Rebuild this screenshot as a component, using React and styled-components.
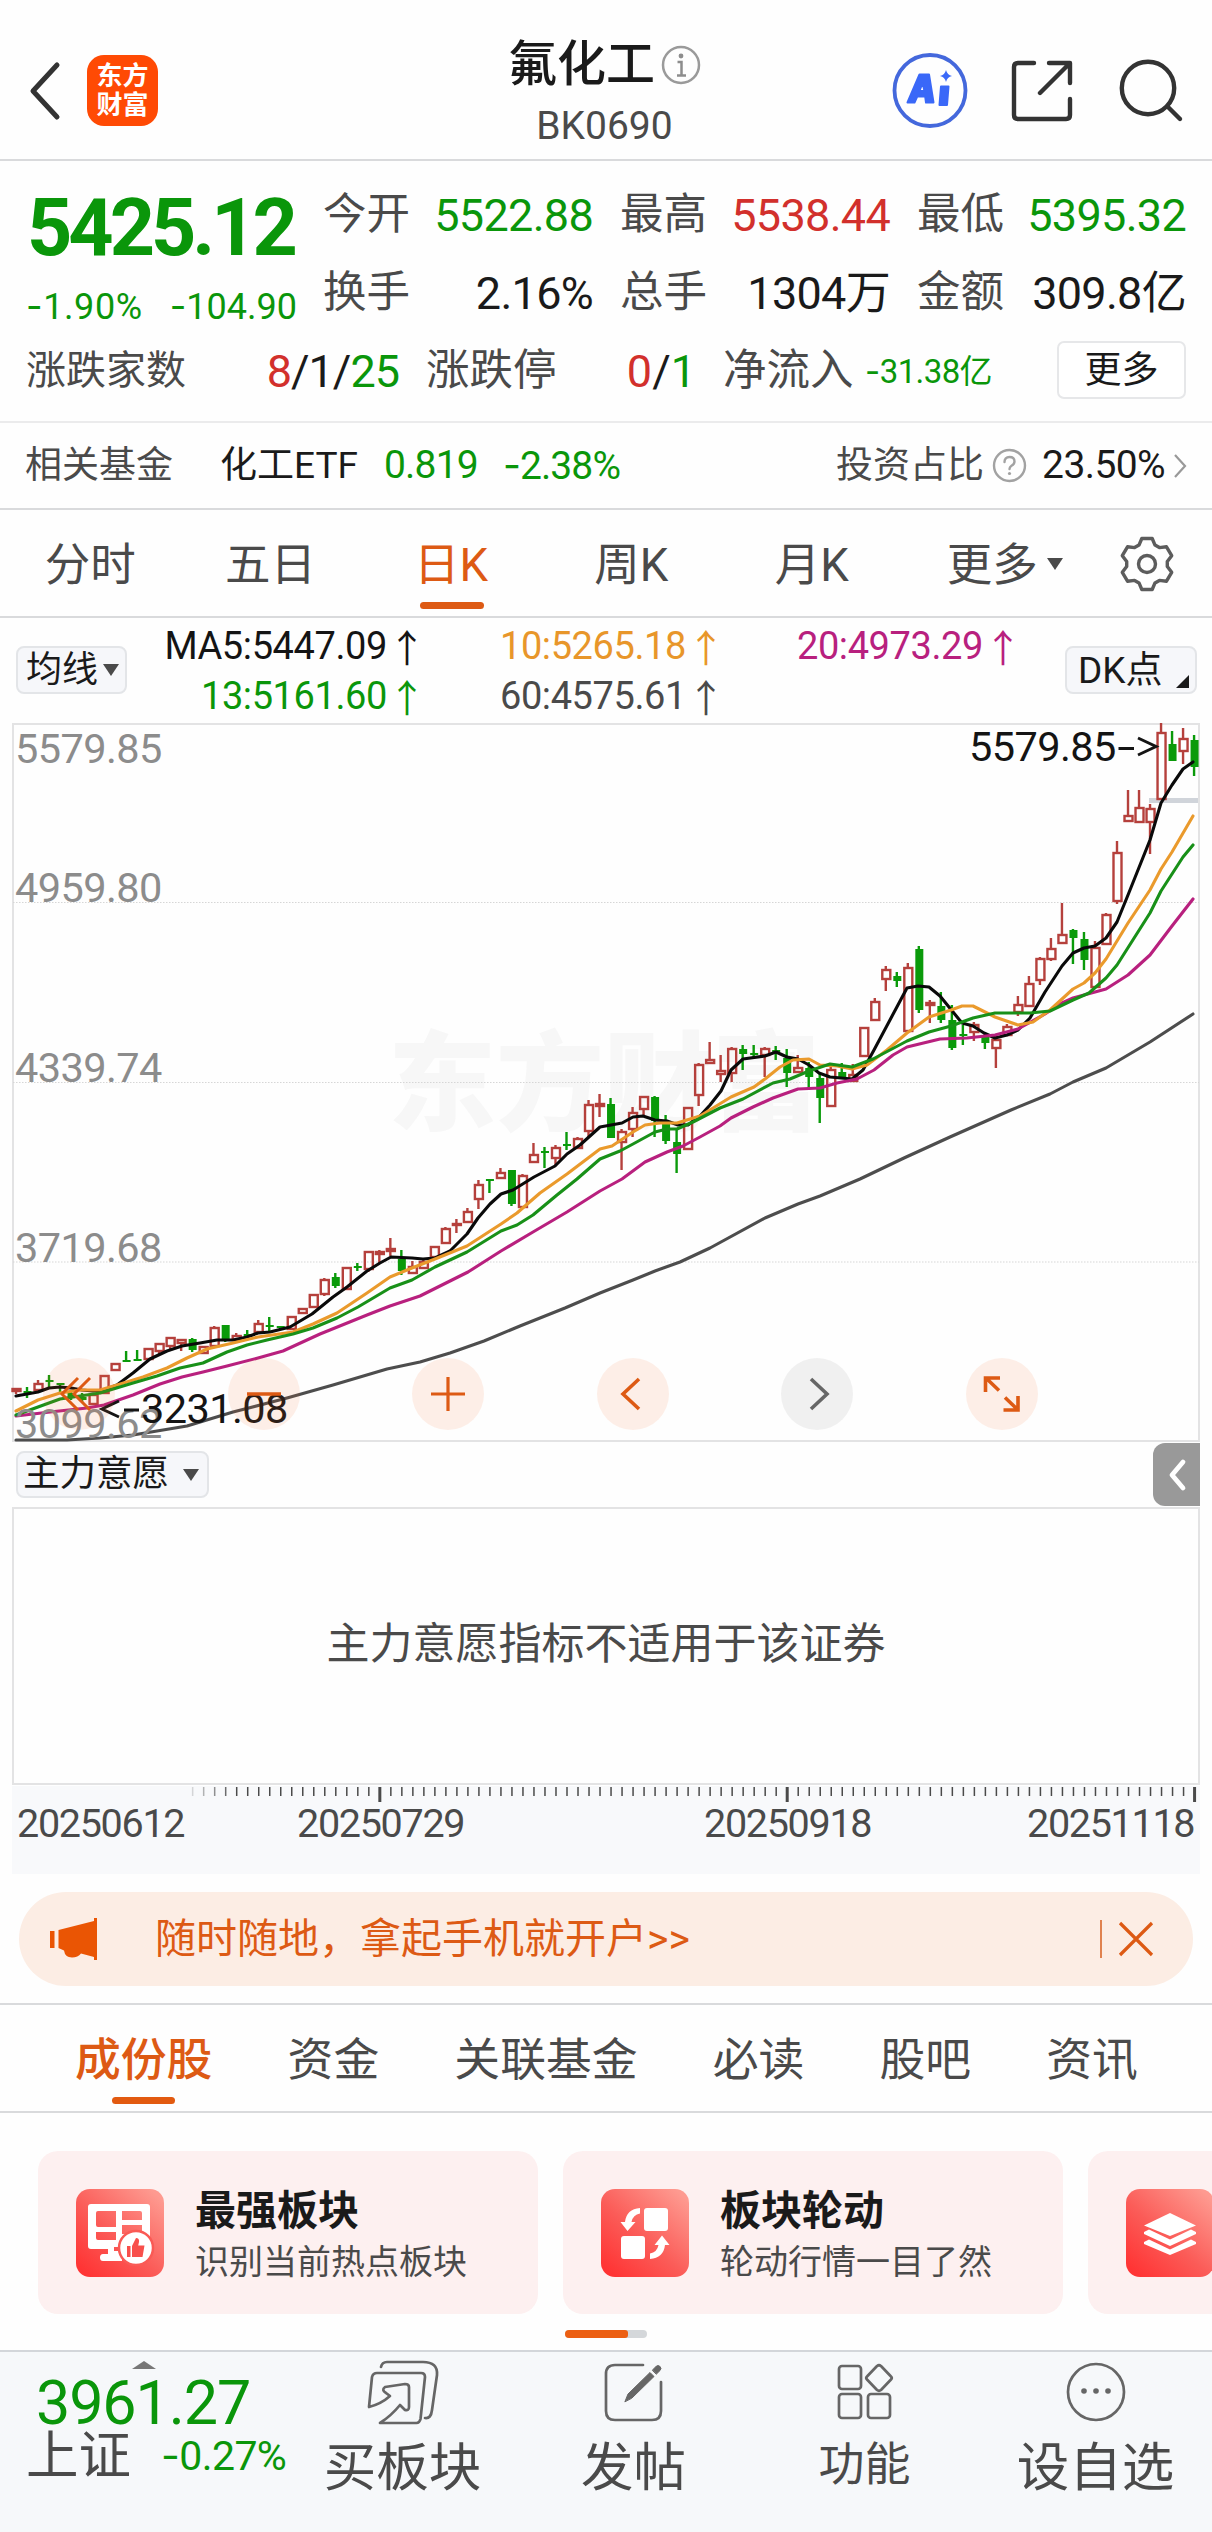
import React from 'react';
import styled, { createGlobalStyle, css } from 'styled-components';

const C = {
  ink: '#1a1a1a',
  label: '#4a4a4a',
  green: '#0a960a',
  red: '#d2302c',
  orange: '#dd5a14',
  line: '#d9dadc',
};

const GlobalStyle = createGlobalStyle`
  * { box-sizing: border-box; }
  html, body { margin: 0; padding: 0; background: #fff; }
  body {
    width: 1212px;
    font-family: Roboto, "Noto Sans CJK SC", sans-serif;
    color: ${C.ink};
    line-height: 1;
    overflow-x: hidden;
  }
  svg { display: block; flex: none; overflow: visible; }
`;

const Page = styled.div`
  width: 1212px;
  height: 2532px;
  background: #fefefe;
  display: flex;
  flex-direction: column;
  overflow: hidden;
`;

const Txt = styled.span`
  font-size: ${(p) => p.$size}px;
  line-height: 1;
  letter-spacing: ${(p) => p.$ls || 0}px;
  font-weight: ${(p) => p.$weight || 400};
  color: ${(p) => p.$color || C.ink};
  white-space: nowrap;
  margin: 0 ${(p) => p.$mr || 0}px 0 ${(p) => p.$ml || 0}px;
`;

const Minus = styled.span`
  font-family: Inter, Roboto, sans-serif;
`;

/* ---------- header ---------- */

const Header = styled.header`
  height: 161px;
  flex: none;
  border-bottom: 2px solid ${C.line};
  display: grid;
  grid-template-columns: 400px 1fr 400px;
  align-items: start;
`;

const HeaderLeft = styled.div`
  display: flex;
  align-items: center;
  gap: 26px;
  padding: 55px 0 0 28px;
`;

const Logo = styled.div`
  width: 71px;
  height: 71px;
  border-radius: 17px;
  background: #ff4a04;
  display: flex;
  flex-direction: column;
  align-items: center;
  justify-content: center;
  gap: 3px;
`;

const TitleBlock = styled.div`
  padding: 39px 3px 0 0;
  display: flex;
  flex-direction: column;
  align-items: center;
  gap: 18px;
`;

const TitleRow = styled.div`
  display: flex;
  align-items: center;
  gap: 6px;
  height: 50px;
`;

const HeaderRight = styled.div`
  display: flex;
  justify-content: flex-end;
  padding: 52px 29px 0 0;
`;

const HeaderAction = styled.div`
  padding-top: ${(p) => p.$top || 0}px;
  margin-left: ${(p) => p.$gap || 0}px;
`;

/* ---------- quote ---------- */

const Quote = styled.section`
  height: 262px;
  flex: none;
  border-bottom: 2px solid #ebebec;
  padding: 15px 26px 0 26px;
`;

const QuoteTop = styled.div`
  display: grid;
  grid-template-columns: 297px 1fr;
  height: 156px;
`;

const PriceBlock = styled.div`
  display: flex;
  flex-direction: column;
`;

const Price = styled.div`
  height: 104px;
  display: flex;
  align-items: center;
  padding-left: 1px;
`;

const Change = styled.div`
  height: 50px;
  width: 271px;
  padding-top: 8px;
  display: flex;
  justify-content: space-between;
`;

const Stats = styled.div`
  display: grid;
  grid-template-columns: 270px 270px 269px;
  column-gap: 27px;
  grid-template-rows: 78px 78px;
`;

const Stat = styled.div`
  display: flex;
  align-items: center;
  justify-content: space-between;
`;

const QuoteBottom = styled.div`
  height: 78px;
  display: grid;
  grid-template-columns: 373px 270px 269px 1fr;
  column-gap: 27px;
  align-items: center;
`;

const MoreButton = styled.button`
  width: 129px;
  height: 58px;
  justify-self: end;
  margin-top: -2px;
  border: 2px solid #e6e7e9;
  border-radius: 7px;
  background: #fff;
  padding: 0;
  font: inherit;
`;

/* ---------- related fund ---------- */

const Related = styled.section`
  height: 87px;
  flex: none;
  border-bottom: 2px solid ${C.line};
  display: flex;
  align-items: center;
  padding: 0 25px 0 25px;
`;

const Push = styled.div`
  margin-left: auto;
  display: flex;
  align-items: center;
`;

/* ---------- tabs ---------- */

const PeriodTabs = styled.nav`
  height: 108px;
  flex: none;
  border-bottom: 2px solid ${C.line};
  display: grid;
  grid-template-columns: repeat(6, 180.4px) 1fr;
`;

const PeriodTab = styled.div`
  position: relative;
  display: flex;
  justify-content: center;
  padding-top: ${(p) => p.$top || 33}px;
  ${(p) =>
    p.$active &&
    css`
      &::after {
        content: '';
        position: absolute;
        bottom: 7px;
        left: 59px;
        width: 64px;
        height: 7px;
        border-radius: 4px;
        background: ${C.orange};
      }
    `}
`;

const Down = styled.i`
  width: 0;
  height: 0;
  border-left: 8px solid transparent;
  border-right: 8px solid transparent;
  border-top: 12px solid #4a4a4a;
`;

const TabDown = styled(Down)`
  position: absolute;
  right: 19px;
  top: 48px;
`;

/* ---------- indicator bar ---------- */

const IndicatorBar = styled.section`
  height: 105px;
  flex: none;
  display: grid;
  grid-template-columns: 113px 288px 299px 297px 1fr;
  padding: 0 15px 0 16px;
`;

const Chip = styled.button`
  position: relative;
  display: flex;
  align-items: center;
  border: 2px solid #e3e5e8;
  border-radius: 8px;
  background: #f6f7fa;
  font: inherit;
  height: ${(p) => p.$h || 48}px;
  width: ${(p) => p.$w}px;
  padding: 0 0 0 ${(p) => p.$pad || 8}px;
  gap: ${(p) => p.$gap || 5}px;
`;

const ChipSlot = styled.div`
  padding-top: 28px;
  display: flex;
  justify-content: ${(p) => (p.$end ? 'flex-end' : 'flex-start')};
`;

const Corner = styled.i`
  position: absolute;
  right: 6px;
  bottom: 4px;
  border-left: 13px solid transparent;
  border-bottom: 13px solid #1a1a1a;
`;

const MaColumn = styled.div`
  display: flex;
  flex-direction: column;
  align-items: flex-end;
  padding-top: 3px;
`;

const MaItem = styled.div`
  height: 50px;
  display: flex;
  align-items: center;
  color: ${(p) => p.$color};
  font-size: 38px;
  letter-spacing: -0.4px;
`;

const Arrow = styled.span`
  font-family: "Noto Sans CJK SC", sans-serif;
  font-size: 38px;
  line-height: 50px;
  letter-spacing: 0;
  width: 20px;
  margin-left: 10px;
  display: flex;
  justify-content: center;
`;

/* ---------- chart ---------- */

const ChartBox = styled.section`
  position: relative;
  width: 1188px;
  height: 719px;
  flex: none;
  margin-left: 12px;
  border: 2px solid #e3e3e4;
`;

const ChartSvg = styled.svg`
  position: absolute;
  left: -2px;
  top: -2px;
`;

const Controls = styled.div`
  position: absolute;
  left: 29px;
  bottom: 10px;
  display: flex;
  gap: 112.5px;
`;

const RoundButton = styled.button`
  width: 72px;
  height: 72px;
  border: 0;
  padding: 0;
  border-radius: 50%;
  background: ${(p) => (p.$gray ? 'rgba(120,120,120,.1)' : 'rgba(250,110,50,.11)')};
  display: flex;
  align-items: center;
  justify-content: center;
`;

const SubHead = styled.div`
  height: 65px;
  flex: none;
  display: flex;
  justify-content: space-between;
  align-items: flex-start;
  padding: 0 12px 0 16px;
`;

const SubChip = styled.div`
  padding-top: 9px;
`;

const SideTab = styled.div`
  margin-top: 1px;
  width: 47px;
  height: 63px;
  background: #999;
  border-radius: 12px 0 0 12px;
  display: flex;
  align-items: center;
  justify-content: center;
`;

const SubPanel = styled.section`
  width: 1188px;
  height: 278px;
  flex: none;
  margin-left: 12px;
  border: 2px solid #e3e3e4;
  display: flex;
  align-items: center;
  justify-content: center;
  padding-bottom: 3px;
`;

const Axis = styled.div`
  width: 1188px;
  height: 88px;
  margin: 1px 0 0 12px;
  flex: none;
  background: #f8f9fb;
`;

const AxisLabels = styled.div`
  display: grid;
  grid-template-columns: 280px 407px 323px 1fr;
  padding: 1px 0 0 5px;
`;

/* ---------- banner ---------- */

const Banner = styled.section`
  width: 1174px;
  height: 94px;
  flex: none;
  margin: 18px 0 17px 19px;
  border-radius: 47px;
  background: #fcede4;
  display: flex;
  align-items: center;
  padding: 0 39px 0 30px;
`;

const BannerText = styled.div`
  margin-left: 57px;
  flex: 1;
`;

const Divider = styled.i`
  width: 2px;
  height: 38px;
  background: #e0824f;
  margin-right: 16px;
`;

/* ---------- section tabs ---------- */

const SectionTabs = styled.nav`
  height: 110px;
  flex: none;
  border-top: 2px solid ${C.line};
  border-bottom: 2px solid ${C.line};
  display: flex;
  gap: 75.2px;
  padding: 33px 0 0 75px;
`;

const SectionTab = styled.div`
  position: relative;
  ${(p) =>
    p.$active &&
    css`
      &::after {
        content: '';
        position: absolute;
        left: 37px;
        top: 59px;
        width: 63px;
        height: 7px;
        border-radius: 4px;
        background: #e25a10;
      }
    `}
`;

/* ---------- cards ---------- */

const Cards = styled.section`
  flex: none;
  display: flex;
  gap: 25px;
  padding: 38px 0 0 38px;
  width: 1212px;
  overflow: hidden;
`;

const Card = styled.div`
  width: 500px;
  height: 163px;
  flex: none;
  border-radius: 20px;
  background: #fdf0f0;
  display: flex;
  align-items: center;
  padding-left: 38px;
  gap: 31px;
`;

const CardText = styled.div`
  display: flex;
  flex-direction: column;
  gap: 13px;
  padding-top: 4px;
`;

const Pager = styled.div`
  width: 82px;
  height: 8px;
  flex: none;
  margin: 16px 0 12px 565px;
  border-radius: 4px;
  background: #d4d7da;
  overflow: hidden;
`;

const PagerOn = styled.div`
  width: 63px;
  height: 8px;
  border-radius: 0 3px 3px 0;
  background: #ec5f12;
`;

/* ---------- bottom bar ---------- */

const BottomBar = styled.footer`
  flex: 1;
  border-top: 2px solid #d3d6da;
  background: #f6f8fa;
  display: grid;
  grid-template-columns: 287px 231px 231px 231px 231px;
`;

const IndexCell = styled.div`
  padding: 9px 0 0 26px;
`;

const UpMark = styled.i`
  display: block;
  width: 0;
  margin-left: 106px;
  border-left: 12px solid transparent;
  border-right: 12px solid transparent;
  border-bottom: 8px solid #777;
`;

const IndexPrice = styled.div`
  padding: 4px 0 0 10px;
  height: 59px;
`;

const IndexRow = styled.div`
  display: flex;
  align-items: center;
  height: 56px;
  gap: 30px;
`;

const Action = styled.div`
  display: flex;
  flex-direction: column;
  align-items: center;
`;

const ActionIcon = styled.div`
  height: ${(p) => p.$h || 90}px;
  padding-top: 6px;
`;

/* ---------- icons ---------- */

const stroke = (color, w) => ({
  fill: 'none',
  stroke: color,
  strokeWidth: w,
  strokeLinecap: 'round',
  strokeLinejoin: 'round',
});

const BackIcon = () => (
  <svg width="33" height="60" viewBox="0 0 33 60">
    <path d="M29 4 5 30 29 56" {...stroke('#333', 5)} />
  </svg>
);

const InfoIcon = () => (
  <svg width="40" height="40" viewBox="0 0 40 40">
    <circle cx="20" cy="21" r="18" {...stroke('#9a9a9a', 2.5)} />
    <circle cx="20" cy="12" r="2.4" fill="#8d8d8d" />
    <path d="M16.5 18h4v13M16 31.5h9" fill="none" stroke="#8d8d8d" strokeWidth="2.5" />
  </svg>
);

const AiIcon = () => (
  <svg width="76" height="76" viewBox="0 0 76 76">
    <circle cx="38" cy="38.5" r="35.5" {...stroke('#4468dc', 3.8)} />
    <path
      fillRule="evenodd"
      fill="#3a68f8"
      stroke="#3a68f8"
      strokeWidth="2"
      strokeLinejoin="round"
      d="M27.500 22.500h9.500l4.500 28h-7.500l-.8-6h-8l-2.700 6H15.500zM30.500 31l-3 8h5z"
    />
    <path d="M49 34.500h7.500L55 53H47.500z" fill="#3a68f8" stroke="#3a68f8" strokeWidth="2" strokeLinejoin="round" />
    <path d="M54 18q1.200 4.800 6 6-4.800 1.200-6 6-1.200-4.800-6-6 4.800-1.200 6-6z" fill="#3a68f8" />
  </svg>
);

const ShareIcon = () => (
  <svg width="62" height="62" viewBox="0 0 62 62">
    <path d="M23 3H7Q3 3 3 7v48q0 4 4 4h48q4 0 4-4V39M38 3h21v20M57 5 29 33" {...stroke('#333', 4.4)} />
  </svg>
);

const SearchIcon = () => (
  <svg width="64" height="64" viewBox="0 0 64 64">
    <circle cx="29" cy="29" r="26.200" {...stroke('#333', 4.400)} />
    <path d="M49 48 61 60" {...stroke('#333', 4.400)} />
  </svg>
);

const HelpIcon = () => (
  <svg width="35" height="35" viewBox="0 0 35 35">
    <circle cx="17.5" cy="17.5" r="15.5" {...stroke('#a2a2a2', 2.4)} />
    <path d="M12.500 14q0-5 5-5t5 4.500q0 2.500-3 4.200-2 1.300-2 3.300" {...stroke('#a2a2a2', 2.4)} />
    <circle cx="17.500" cy="25.500" r="1.600" fill="#a2a2a2" />
  </svg>
);

const gearPath = (() => {
  const pts = [];
  for (let k = 0; k < 6; k += 1) {
    const base = (k * Math.PI) / 3 - Math.PI / 2;
    [
      [-0.4, 20.5],
      [-0.2, 26],
      [0.2, 26],
      [0.4, 20.5],
    ].forEach(([da, r]) => pts.push(`${(28 + r * Math.cos(base + da)).toFixed(1)} ${(28 + r * Math.sin(base + da)).toFixed(1)}`));
  }
  return `M${pts.join('L')}Z`;
})();

const GearIcon = () => (
  <svg width="56" height="56" viewBox="0 0 56 56">
    <path d={gearPath} {...stroke('#5c5c5c', 3.4)} />
    <circle cx="28" cy="28" r="8.500" {...stroke('#5c5c5c', 3.4)} />
  </svg>
);

const ControlIcon = ({ kind }) => {
  const o = { fill: 'none', stroke: C.orange, strokeWidth: 3.6 };
  return (
    <svg width="72" height="72" viewBox="0 0 72 72">
      {kind === 'first' && <path d="M35 20 19 36 35 52M47 20 31 36 47 52" {...o} strokeWidth="3" />}
      {kind === 'minus' && <path d="M19 36H53" {...o} />}
      {kind === 'plus' && <path d="M19 36H53M36 19V53" {...o} strokeWidth="3.200" />}
      {kind === 'prev' && <path d="M42 21 26 36 42 51" {...o} />}
      {kind === 'next' && <path d="M30 21 46 36 30 51" {...o} stroke="#666" />}
      {kind === 'expand' && <path d="M19.500 34V20H34M21 21 33 32.500M52 38V52H37.500M51 51 39 39.500" {...o} />}
    </svg>
  );
};

const HornIcon = () => (
  <svg width="49" height="44" viewBox="0 0 49 44">
    <path d="M1 14h4.500v17H1zM9.500 13 45 4V1h3v42h-3v-3l-13-3.500q-3 4-9 4-7 0-8-7L9.500 31z" fill="#ea5504" />
  </svg>
);

const CloseIcon = () => (
  <svg width="36" height="36" viewBox="0 0 36 36">
    <path d="M2 2 34 34M34 2 2 34" fill="none" stroke={C.orange} strokeWidth="3.200" />
  </svg>
);

const CardIcon = ({ kind }) => (
  <svg width="88" height="88" viewBox="0 0 88 88">
    <defs>
      <linearGradient id={`g-${kind}`} x1="0.100" y1="0.950" x2="0.900" y2="0.050">
        <stop offset="0" stopColor="#ff3434" />
        <stop offset="0.450" stopColor="#fb5c58" />
        <stop offset="1" stopColor="#fe9a90" />
      </linearGradient>
    </defs>
    <rect width="88" height="88" rx="14" fill={`url(#g-${kind})`} />
    {kind === 'board' && (
      <g>
        <path
          fillRule="evenodd"
          fill="#fff"
          d="M15 15h56q3 0 3 3v40H38v4h8v10H27q-3 0-3-3.500t3-3.500h5v-5H15q-3 0-3-3V18q0-3 3-3zM22 22q-2 0-2 2v12q0 2 2 2h18V22zM46 22v9h20V24q0-2-2-2zM46 36v9h20v-9zM20 43v6q0 2 2 2h18v-8z"
        />
        <circle cx="60" cy="59" r="17" fill="#fff" stroke="#fa5a55" strokeWidth="2.500" />
        <path d="M51 57h3.500v11H51zM56 57l4-8q3.500 0 3 4l-.8 3.500h6.300l-2 11.500H56z" fill="#f84f4b" />
      </g>
    )}
    {kind === 'rotate' && (
      <g>
        <rect x="43" y="19" width="24" height="23" rx="3" fill="#fff" />
        <rect x="20" y="47" width="24" height="23" rx="3" fill="#fff" />
        <path
          d="M39 19v5.500q-7 1-8.500 8.500h4L26.500 42l-7-9H24q1.500-13 15-14zM49 70v-5.500q7-1 8.500-8.500h-4l7.500-9.500 7.500 9.500H64q-1.500 13-15 14z"
          fill="#fff"
        />
      </g>
    )}
    {kind === 'layers' && (
      <g fill="#fff">
        <path d="M44 24 70 36.500 44 47 18 36.500z" />
        <path d="M18 43l5-2.500 21 10 21-10 5 2.500v2L44 57 18 45zM18 53l5-2.500 21 10 21-10 5 2.500v2L44 66 18 55z" />
      </g>
    )}
  </svg>
);

const NavIcon = ({ kind }) => {
  const s = stroke('#666', 2.700);
  return (
    <svg width="74" height="68" viewBox="0 0 74 68">
      {kind === 'buy' && (
        <g {...s}>
          <path d="M15 9q1-5 6-5h36q15 0 14 13L66 52q-1 9-7 8" />
          <path d="M3 49 6 19q1-4 5-4h44q4 0 4 4l-4.500 42q-1 4-4 4H14Q25 58 34 47l5 5q4 1 4-3V29q0-3-4-3l-20 3q-4 3 1 6l4 3Q15 46 3 49z" />
        </g>
      )}
      {kind === 'edit' && (
        <g {...s}>
          <path d="M46 7H18q-9 0-9 9v37q0 9 9 9h37q9 0 9-9V24" />
          <path d="M28 43.500 31 36 53 14.500l4 4L35 40z" fill="#666" strokeWidth="1" />
          <path d="M55.500 12l3.500-3.500q2-2 4 0t0 4L59.500 16z" fill="#666" strokeWidth="1" />
        </g>
      )}
      {kind === 'grid' && (
        <g {...s}>
          <rect x="11" y="8" width="22" height="23" rx="3" />
          <rect x="11" y="36" width="22" height="24" rx="3" />
          <rect x="40" y="36" width="22" height="24" rx="3" />
          <path d="M49 8q2-1.500 4 0l10 10.500q1.500 1.500 0 3L53 32q-2 1.500-4 0L39 21.500q-1.500-1.500 0-3z" />
        </g>
      )}
      {kind === 'dots' && (
        <g>
          <circle cx="37" cy="34" r="28" {...s} />
          {[25, 37, 49].map((x) => (
            <circle key={x} cx={x} cy="33" r="2.800" fill="#666" />
          ))}
        </g>
      )}
    </svg>
  );
};

/* ---------- chart data: [up, bodyTop, bodyBottom, high, low] ---------- */

const candles = [
  [1,1388,1391,1388,1394],[0,1391,1393,1387,1398],[1,1383,1390,1380,1390],[0,1380,1382,1375,1387],[0,1383,1385,1383,1392],
  [0,1393,1398,1390,1400],[0,1397,1400,1393,1402],[1,1394,1404,1394,1404],[1,1375,1393,1375,1393],[1,1363,1370,1363,1370],
  [0,1360,1362,1351,1362],[0,1359,1361,1350,1361],[1,1348,1359,1348,1359],[1,1343,1351,1343,1354],[1,1337,1346,1337,1350],
  [1,1339,1343,1339,1351],[0,1339,1350,1338,1352],[1,1346,1353,1346,1353],[1,1327,1346,1326,1346],[0,1325,1340,1325,1342],
  [1,1335,1340,1333,1340],[0,1334,1336,1330,1337],[1,1323,1332,1320,1332],[0,1325,1327,1317,1332],[0,1326,1328,1326,1330],
  [1,1316,1329,1316,1330],[1,1308,1313,1308,1313],[1,1294,1307,1294,1307],[1,1279,1294,1278,1296],[0,1277,1286,1273,1288],
  [1,1267,1289,1267,1289],[0,1266,1268,1263,1271],[1,1251,1269,1251,1272],[1,1251,1254,1250,1263],[1,1248,1251,1238,1256],
  [0,1259,1271,1250,1275],[1,1266,1273,1261,1273],[1,1261,1268,1259,1268],[1,1246,1257,1246,1257],[1,1228,1243,1227,1243],
  [1,1223,1225,1219,1233],[1,1211,1222,1208,1222],[1,1184,1199,1180,1209],[0,1179,1181,1179,1193],[1,1172,1178,1168,1178],
  [0,1170,1204,1170,1206],[1,1175,1207,1174,1207],[1,1154,1162,1143,1162],[0,1151,1153,1147,1168],[1,1147,1158,1145,1165],
  [0,1144,1146,1132,1150],[1,1138,1148,1137,1148],[1,1104,1131,1100,1137],[1,1103,1106,1094,1117],[0,1104,1138,1098,1138],
  [1,1131,1142,1129,1170],[1,1112,1129,1107,1137],[1,1096,1109,1096,1117],[0,1097,1121,1096,1137],[0,1121,1141,1115,1144],
  [0,1142,1154,1130,1173],[1,1107,1149,1107,1149],[1,1064,1095,1063,1106],[1,1059,1063,1042,1064],[1,1070,1074,1055,1082],
  [1,1048,1073,1047,1082],[0,1049,1054,1045,1070],[0,1053,1055,1045,1057],[1,1048,1055,1047,1077],[0,1050,1052,1046,1060],
  [0,1058,1073,1049,1087],[1,1067,1072,1055,1073],[0,1068,1077,1062,1088],[0,1078,1098,1073,1123],[1,1069,1106,1066,1106],
  [0,1072,1078,1063,1078],[1,1074,1081,1064,1081],[1,1027,1056,1027,1056],[1,1001,1020,998,1020],[1,969,979,966,991],
  [0,976,981,972,987],[1,967,1031,963,1031],[0,949,1010,946,1013],[1,1002,1005,1000,1023],[0,1006,1020,992,1023],
  [0,1020,1048,1005,1050],[0,1034,1036,1025,1045],[1,1024,1032,1022,1041],[0,1037,1043,1032,1049],[1,1039,1048,1036,1068],
  [1,1026,1035,1024,1035],[1,1004,1012,996,1016],[1,983,1006,976,1007],[1,958,980,957,985],[1,948,959,938,961],
  [1,934,943,903,944],[0,930,938,929,964],[0,939,960,932,970],[1,947,987,941,987],[1,914,944,913,944],
  [1,852,901,841,904],[1,815,821,790,821],[1,807,822,790,822],[1,808,822,804,854],[1,732,799,723,799],
  [0,744,761,731,761],[1,738,751,728,764],[0,740,767,735,776],
];

const lines = [
  ['#4d4d4d', '16,1440 67,1440 100,1438 133,1435 187,1426 233,1412 287,1398 333,1385 387,1369 420,1362 450,1353 484,1341 520,1326 565,1308 600,1293 633,1280 655,1271 680,1262 710,1248 765,1218 798,1204 820,1196 860,1179 904,1158 950,1137 1011,1110 1050,1094 1073,1082 1106,1068 1150,1042 1193,1014'],
  ['#0a0a0a', '16,1396 38,1392 49,1388 60,1387 71,1388 82,1390 93,1391 104,1390 117,1385 133,1373 150,1359 167,1351 182,1346 200,1343 217,1340 233,1340 247,1337 258,1333 270,1332 290,1327 312,1314 333,1297 347,1287 367,1271 380,1263 391,1257 412,1258 423,1259 435,1258 450,1251 467,1234 478,1218 490,1204 501,1194 513,1190 534,1177 555,1166 567,1154 580,1145 600,1127 622,1123 633,1117 643,1116 655,1120 667,1121 678,1125 688,1125 700,1116 710,1105 721,1091 731,1070 743,1059 765,1056 776,1052 787,1057 798,1059 809,1065 819,1073 830,1077 852,1079 863,1070 874,1050 907,988 918,986 929,987 940,996 962,1023 973,1026 984,1033 995,1038 1007,1035 1018,1030 1030,1018 1045,992 1062,966 1073,953 1084,948 1095,946 1106,938 1117,922 1128,895 1150,840 1161,803 1172,785 1183,769 1193,762'],
  ['#b8207e', '16,1416 50,1412 87,1408 104,1405 133,1395 160,1384 182,1377 203,1372 227,1366 258,1358 283,1351 320,1334 367,1315 390,1306 420,1296 452,1280 468,1272 501,1251 533,1232 567,1212 600,1191 622,1179 645,1162 667,1152 683,1146 700,1137 720,1126 731,1118 753,1107 773,1098 798,1089 820,1088 837,1083 857,1079 874,1070 893,1055 907,1047 940,1039 967,1038 995,1035 1018,1029 1045,1014 1062,1003 1073,998 1106,989 1128,975 1150,955 1172,926 1193,899'],
  ['#ea9a2c', '16,1411 38,1400 60,1393 80,1390 100,1390 117,1385 143,1377 167,1368 187,1358 207,1349 233,1343 258,1337 293,1332 313,1324 337,1313 367,1293 390,1277 412,1268 435,1259 467,1246 501,1224 517,1213 540,1193 567,1174 600,1149 612,1146 633,1132 645,1125 660,1123 677,1123 700,1116 731,1097 754,1087 765,1079 780,1067 793,1060 809,1059 820,1065 837,1066 852,1069 867,1065 887,1050 907,1033 929,1017 951,1010 962,1006 973,1006 995,1017 1018,1025 1033,1022 1050,1010 1073,989 1084,983 1095,973 1106,959 1128,923 1150,890 1161,869 1172,852 1193,816'],
  ['#189018', '16,1415 38,1407 60,1399 80,1396 100,1393 133,1383 157,1376 180,1368 203,1363 227,1352 247,1345 267,1340 293,1334 313,1328 337,1318 358,1307 390,1288 412,1280 435,1267 467,1252 501,1231 517,1225 533,1215 557,1195 577,1179 600,1159 620,1151 633,1144 655,1132 667,1129 677,1129 693,1122 720,1108 743,1099 773,1083 790,1079 809,1071 830,1064 852,1067 873,1059 907,1041 929,1032 951,1026 973,1018 995,1013 1030,1013 1050,1011 1073,1000 1089,993 1106,978 1117,965 1150,913 1161,891 1183,857 1193,845'],
];

const KChart = () => (
  <ChartSvg width="1188" height="719" viewBox="12 723 1188 719">
    <text x="388" y="1122" fontSize="108" fontWeight="900" fill="#f7f7f7">东方财富</text>
    {[902.5, 1082.5, 1262].map((y) => (
      <line key={y} x1="13" x2="1199" y1={y} y2={y} stroke="#d6d6d6" strokeWidth="1" strokeDasharray="1.500 1.500" />
    ))}
    <line x1="1149" x2="1198" y1="800.5" y2="800.5" stroke="#d0d4da" strokeWidth="5" />
    {candles.map(([up, t, b, hi, lo], i) => {
      const x = 16 + 11.01 * i;
      const color = up ? '#b5403c' : '#0a9a0a';
      return (
        <g key={i} stroke={color} strokeWidth="2.400">
          {hi < t && <line x1={x} x2={x} y1={hi} y2={t} />}
          {lo > b && <line x1={x} x2={x} y1={b} y2={lo} />}
          {up ? (
            <rect x={x - 3.5} y={t + 1} width="8" height={Math.max(b - t - 1, 1)} fill="none" />
          ) : (
            <rect x={x - 3.5} y={t} width="8" height={b - t} fill={color} stroke="none" />
          )}
        </g>
      );
    })}
    {lines.map(([color, pts]) => (
      <polyline key={color} points={pts} fill="none" stroke={color} strokeWidth="3.100" strokeLinejoin="round" strokeLinecap="round" />
    ))}
    <g fontSize="41.500" fill="#8c8c8c" letterSpacing="-0.600">
      <text x="15" y="763">5579.85</text>
      <text x="15" y="902">4959.80</text>
      <text x="15" y="1082">4339.74</text>
      <text x="15" y="1262">3719.68</text>
      <text x="15" y="1438">3099.62</text>
    </g>
    <g fontSize="41.500" fill="#141414" letterSpacing="-0.600">
      <text x="969" y="761">5579.85</text>
      <text x="141" y="1423">3231.08</text>
    </g>
    <path d="M1118.500 748.500H1134M1138 738 1156 746.500 1138 755M119 1401 102 1409 119 1417M124 1410H139" fill="none" stroke="#141414" strokeWidth="3" />
  </ChartSvg>
);

const Ticks = () => (
  <svg width="1188" height="17" viewBox="12 1786 1188 17">
    {Array.from({ length: 92 }, (_, k) => {
      const i = k + 16;
      const major = i === 33 || i === 70 || i === 107;
      const x = 16.5 + 11.01 * i;
      return (
        <line
          key={i}
          x1={x}
          x2={x}
          y1="1787"
          y2={major ? 1802 : 1796}
          stroke="#4a4a4a"
          strokeWidth={major ? 3 : 1.5}
          opacity={i < 20 ? 0.2 + (i - 16) * 0.2 : 1}
        />
      );
    })}
  </svg>
);

const MA = ({ color, children }) => (
  <MaItem $color={color}>
    <span>{children}</span>
    <Arrow>↑</Arrow>
  </MaItem>
);

const StatItem = ({ label, value, color }) => (
  <Stat>
    <Txt $size={43.5} $color={C.label}>{label}</Txt>
    <Txt $size={45} $ls={-0.7} $color={color}>{value}</Txt>
  </Stat>
);

const periods = ['分时', '五日', '日K', '周K', '月K', '更多'];
const sections = ['成份股', '资金', '关联基金', '必读', '股吧', '资讯'];
const actions = [
  ['buy', '买板块', 52.5, 90],
  ['edit', '发帖', 52.5, 90],
  ['grid', '功能', 46, 89],
  ['dots', '设自选', 52.5, 90],
];

export default function App() {
  return (
    <>
      <GlobalStyle />
      <Page>
        <Header>
          <HeaderLeft>
            <BackIcon />
            <Logo>
              <Txt $size={26} $weight={700} $color="#fff">东方</Txt>
              <Txt $size={26} $weight={700} $color="#fff">财富</Txt>
            </Logo>
          </HeaderLeft>
          <TitleBlock>
            <TitleRow>
              <Txt $size={49} $weight={500}>氟化工</Txt>
              <InfoIcon />
            </TitleRow>
            <Txt $size={39} $color={C.label}>BK0690</Txt>
          </TitleBlock>
          <HeaderRight>
            <HeaderAction><AiIcon /></HeaderAction>
            <HeaderAction $gap={43} $top={8}><ShareIcon /></HeaderAction>
            <HeaderAction $gap={46} $top={7}><SearchIcon /></HeaderAction>
          </HeaderRight>
        </Header>

        <Quote>
          <QuoteTop>
            <PriceBlock>
              <Price>
                <Txt $size={79} $weight={700} $ls={-4} $color={C.green}>5425.12</Txt>
              </Price>
              <Change>
                <Txt $size={36} $ls={0.6} $color={C.green}><Minus>-</Minus>1.90%</Txt>
                <Txt $size={36} $ls={0} $color={C.green}><Minus>-</Minus>104.90</Txt>
              </Change>
            </PriceBlock>
            <Stats>
              <StatItem label="今开" value="5522.88" color={C.green} />
              <StatItem label="最高" value="5538.44" color={C.red} />
              <StatItem label="最低" value="5395.32" color={C.green} />
              <StatItem label="换手" value="2.16%" />
              <StatItem label="总手" value="1304万" />
              <StatItem label="金额" value="309.8亿" />
            </Stats>
          </QuoteTop>
          <QuoteBottom>
            <Stat>
              <Txt $size={40} $color={C.label}>涨跌家数</Txt>
              <Txt $size={45} $ls={-1}>
                <Txt $size={45} $ls={-1} $color={C.red}>8</Txt>/1/<Txt $size={45} $ls={-1} $color={C.green}>25</Txt>
              </Txt>
            </Stat>
            <Stat>
              <Txt $size={43.5} $color={C.label}>涨跌停</Txt>
              <Txt $size={45}>
                <Txt $size={45} $color={C.red}>0</Txt>/<Txt $size={45} $color={C.green}>1</Txt>
              </Txt>
            </Stat>
            <Stat>
              <Txt $size={43.5} $color={C.label}>净流入</Txt>
              <Txt $size={33} $ls={-0.6} $color={C.green}><Minus>-</Minus>31.38亿</Txt>
            </Stat>
            <MoreButton><Txt $size={37}>更多</Txt></MoreButton>
          </QuoteBottom>
        </Quote>

        <Related>
          <Txt $size={37} $color={C.label} $mr={47}>相关基金</Txt>
          <Txt $size={37} $mr={26}>化工ETF</Txt>
          <Txt $size={39} $ls={-0.8} $color={C.green} $mr={25}>0.819</Txt>
          <Txt $size={39} $ls={-0.9} $color={C.green}><Minus>-</Minus>2.38%</Txt>
          <Push>
            <Txt $size={37} $color={C.label} $mr={8}>投资占比</Txt>
            <HelpIcon />
            <Txt $size={39} $ls={-0.6} $ml={15} $mr={8}>23.50%</Txt>
            <svg width="14" height="24" viewBox="0 0 14 24">
              <path d="M2 1 12 12 2 23" fill="none" stroke="#999" strokeWidth="2.200" />
            </svg>
          </Push>
        </Related>

        <PeriodTabs>
          {periods.map((t, i) => (
            <PeriodTab key={t} $active={i === 2}>
              <Txt $size={45.5} $color={i === 2 ? C.orange : C.label}>{t}</Txt>
              {i === 5 && <TabDown />}
            </PeriodTab>
          ))}
          <PeriodTab $top={26}><GearIcon /></PeriodTab>
        </PeriodTabs>

        <IndicatorBar>
          <ChipSlot>
            <Chip $w={111}>
              <Txt $size={36}>均线</Txt>
              <Down />
            </Chip>
          </ChipSlot>
          <MaColumn>
            <MA color="#141414">MA5:5447.09</MA>
            <MA color={C.green}>13:5161.60</MA>
          </MaColumn>
          <MaColumn>
            <MA color="#e8962a">10:5265.18</MA>
            <MA color="#4a4a4a">60:4575.61</MA>
          </MaColumn>
          <MaColumn>
            <MA color="#b8207e">20:4973.29</MA>
          </MaColumn>
          <ChipSlot $end>
            <Chip $w={132} $pad={11}>
              <Txt $size={37}>DK点</Txt>
              <Corner />
            </Chip>
          </ChipSlot>
        </IndicatorBar>

        <ChartBox>
          <KChart />
          <Controls>
            {['first', 'minus', 'plus', 'prev', 'next', 'expand'].map((k) => (
              <RoundButton key={k} $gray={k === 'next'}>
                <ControlIcon kind={k} />
              </RoundButton>
            ))}
          </Controls>
        </ChartBox>

        <SubHead>
          <SubChip>
            <Chip $w={193} $h={47} $pad={5} $gap={14}>
              <Txt $size={36.5}>主力意愿</Txt>
              <Down />
            </Chip>
          </SubChip>
          <SideTab>
            <svg width="18" height="32" viewBox="0 0 18 32">
              <path d="M15 3 4 16 15 29" {...stroke('#fff', 4.800)} />
            </svg>
          </SideTab>
        </SubHead>

        <SubPanel>
          <Txt $size={43} $color={C.label}>主力意愿指标不适用于该证券</Txt>
        </SubPanel>

        <Axis>
          <Ticks />
          <AxisLabels>
            {['20250612', '20250729', '20250918', '20251118'].map((d) => (
              <Txt key={d} $size={39.5} $ls={-1.3} $color={C.label}>{d}</Txt>
            ))}
          </AxisLabels>
        </Axis>

        <Banner>
          <HornIcon />
          <BannerText>
            <Txt $size={41} $color={C.orange}>随时随地，拿起手机就开户&gt;&gt;</Txt>
          </BannerText>
          <Divider />
          <CloseIcon />
        </Banner>

        <SectionTabs>
          {sections.map((t, i) => (
            <SectionTab key={t} $active={i === 0}>
              <Txt $size={45.8} $color={i === 0 ? C.orange : C.label} $weight={i === 0 ? 500 : 400}>{t}</Txt>
            </SectionTab>
          ))}
        </SectionTabs>

        <Cards>
          <Card>
            <CardIcon kind="board" />
            <CardText>
              <Txt $size={41} $weight={700}>最强板块</Txt>
              <Txt $size={34} $color={C.label}>识别当前热点板块</Txt>
            </CardText>
          </Card>
          <Card>
            <CardIcon kind="rotate" />
            <CardText>
              <Txt $size={41} $weight={700}>板块轮动</Txt>
              <Txt $size={34} $color={C.label}>轮动行情一目了然</Txt>
            </CardText>
          </Card>
          <Card>
            <CardIcon kind="layers" />
          </Card>
        </Cards>
        <Pager><PagerOn /></Pager>

        <BottomBar>
          <IndexCell>
            <UpMark />
            <IndexPrice>
              <Txt $size={61} $ls={-1.1} $color={C.green}>3961.27</Txt>
            </IndexPrice>
            <IndexRow>
              <Txt $size={52.5} $color={C.label}>上证</Txt>
              <Txt $size={41} $ls={-0.6} $color={C.green}><Minus>-</Minus>0.27%</Txt>
            </IndexRow>
          </IndexCell>
          {actions.map(([kind, label, size, h]) => (
            <Action key={kind}>
              <ActionIcon $h={h}><NavIcon kind={kind} /></ActionIcon>
              <Txt $size={size} $color={C.label}>{label}</Txt>
            </Action>
          ))}
        </BottomBar>
      </Page>
    </>
  );
}
